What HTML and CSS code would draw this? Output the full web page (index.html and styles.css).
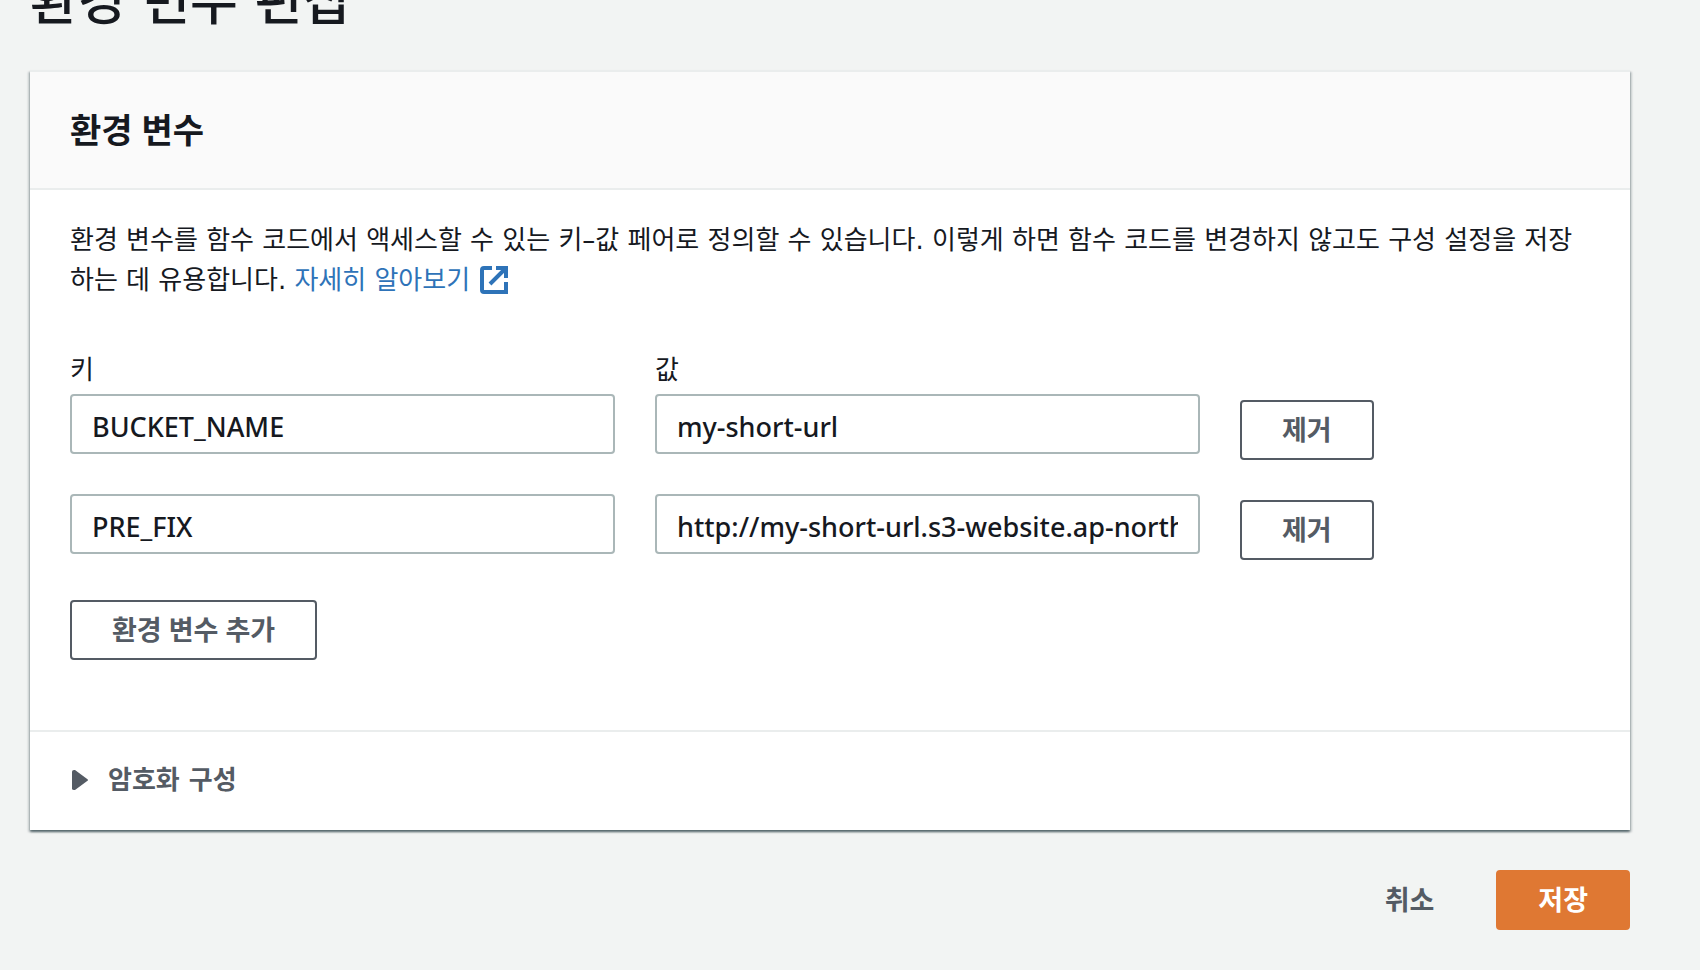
FILE: index.html
```html
<!DOCTYPE html>
<html lang="ko">
<head>
<meta charset="utf-8">
<meta name="viewport" content="width=device-width, initial-scale=1">
<title>환경 변수 편집</title>
<link rel="stylesheet" href="styles.css">
</head>
<body>
<main class="page">
  <h1 class="page-title">환경 변수 편집</h1>
  <form class="form">
    <section class="card">
      <header class="card-header">
        <h2 class="card-title">환경 변수</h2>
      </header>
      <div class="card-body">
        <p class="description">환경 변수를 함수 코드에서 액세스할 수 있는 키–값 페어로 정의할 수 있습니다. 이렇게 하면 함수 코드를 변경하지 않고도 구성 설정을 저장하는 데 유용합니다. <a class="link" href="#">자세히 알아보기<svg class="link-icon" viewBox="0 0 28 28" aria-hidden="true"><path d="M12 2H4Q2 2 2 4V24Q2 26 4 26H26V16M16 2H26V12M10 18L25 3" fill="none" stroke="currentColor" stroke-width="4"/></svg></a></p>
        <div class="variables">
          <label class="label" for="key-1">키</label>
          <label class="label label-value" for="value-1">값</label>
          <input class="input" id="key-1" type="text" value="BUCKET_NAME">
          <input class="input" id="value-1" type="text" value="my-short-url">
          <button class="button button-remove" type="button">제거</button>
          <input class="input" type="text" aria-label="키" value="PRE_FIX">
          <input class="input" type="text" aria-label="값" value="http://my-short-url.s3-website.ap-northeast-2.amazonaws.com">
          <button class="button button-remove" type="button">제거</button>
        </div>
        <button class="button" type="button">환경 변수 추가</button>
      </div>
      <button class="expander" type="button" aria-expanded="false">
        <svg class="expander-icon" viewBox="0 0 16 20" aria-hidden="true"><path d="M0 1.5Q0 0 2 0H3L15.500 9.200Q16.500 10 15.500 10.800L3 20H2Q0 20 0 18.500Z" fill="currentColor"/></svg>
        <span>암호화 구성</span>
      </button>
    </section>
    <div class="actions">
      <button class="button button-plain" type="button">취소</button>
      <button class="button button-primary" type="submit">저장</button>
    </div>
  </form>
</main>
</body>
</html>
```
FILE: styles.css
```css
*,
*::before,
*::after {
  box-sizing: border-box;
}

body {
  margin: 0;
  background: #f2f4f3;
  color: #16191f;
  font-family: "DejaVu Sans", "Noto Sans CJK KR", sans-serif;
  font-size: 26px;
  line-height: 40px;
  overflow: hidden;
}

.page {
  padding: 0 70px 40px 30px;
}

.page-title {
  margin: -36px 0 30px;
  font-size: 52px;
  font-weight: 500;
  line-height: 76px;
}

.card {
  background: #fff;
  border-top: 2px solid #eaeded;
  box-shadow: 0 2px 2px rgba(0, 28, 36, 0.5), 2px 2px 2px rgba(0, 28, 36, 0.15), -2px 2px 2px rgba(0, 28, 36, 0.15);
}

.card-header {
  padding: 38px 40px;
  background: #fafafa;
  border-bottom: 2px solid #eaeded;
}

.card-title {
  margin: 0;
  font: 700 34px/40px "Noto Sans", "Noto Sans CJK KR", sans-serif;
}

.card-body {
  padding: 30px 40px 70px;
}

.description {
  margin: 0 0 50px;
}

.link {
  color: #2e73b8;
  text-decoration: none;
}

.link-icon {
  width: 28px;
  height: 28px;
  margin-left: 10px;
  vertical-align: -5px;
}

.variables {
  display: grid;
  grid-template-columns: 1fr 1fr 350px;
  column-gap: 40px;
  row-gap: 40px;
  margin-bottom: 46px;
}

.label {
  margin-bottom: -36px;
}

.label-value {
  grid-column: 2 / 4;
}

.input {
  width: 100%;
  height: 60px;
  padding: 4px 20px 0;
  border: 2px solid #aab7b8;
  border-radius: 4px;
  background: #fff;
  color: #16191f;
  font: 500 27px "Noto Sans", "Noto Sans CJK KR", sans-serif;
}

.button {
  height: 60px;
  padding: 0 40px 4px;
  border: 2px solid #545b64;
  border-radius: 4px;
  background: #fff;
  color: #545b64;
  font: 700 27px "Noto Sans", "Noto Sans CJK KR", sans-serif;
}

.button-remove {
  justify-self: start;
  margin: 6px 0 -6px;
}

.expander {
  display: flex;
  align-items: center;
  gap: 20px;
  width: 100%;
  padding: 28px 42px 30px;
  border: 0;
  border-top: 2px solid #eaeded;
  background: #fff;
  color: #545b64;
  font: 700 26px/40px "DejaVu Sans", "Noto Sans CJK KR", sans-serif;
}

.expander-icon {
  width: 16px;
  height: 20px;
}

.actions {
  display: flex;
  justify-content: flex-end;
  gap: 20px;
  margin-top: 40px;
}

.button-plain {
  border-color: transparent;
  background: transparent;
}

.button-primary {
  border-color: #df7833;
  background: #df7833;
  color: #fff;
}
```
